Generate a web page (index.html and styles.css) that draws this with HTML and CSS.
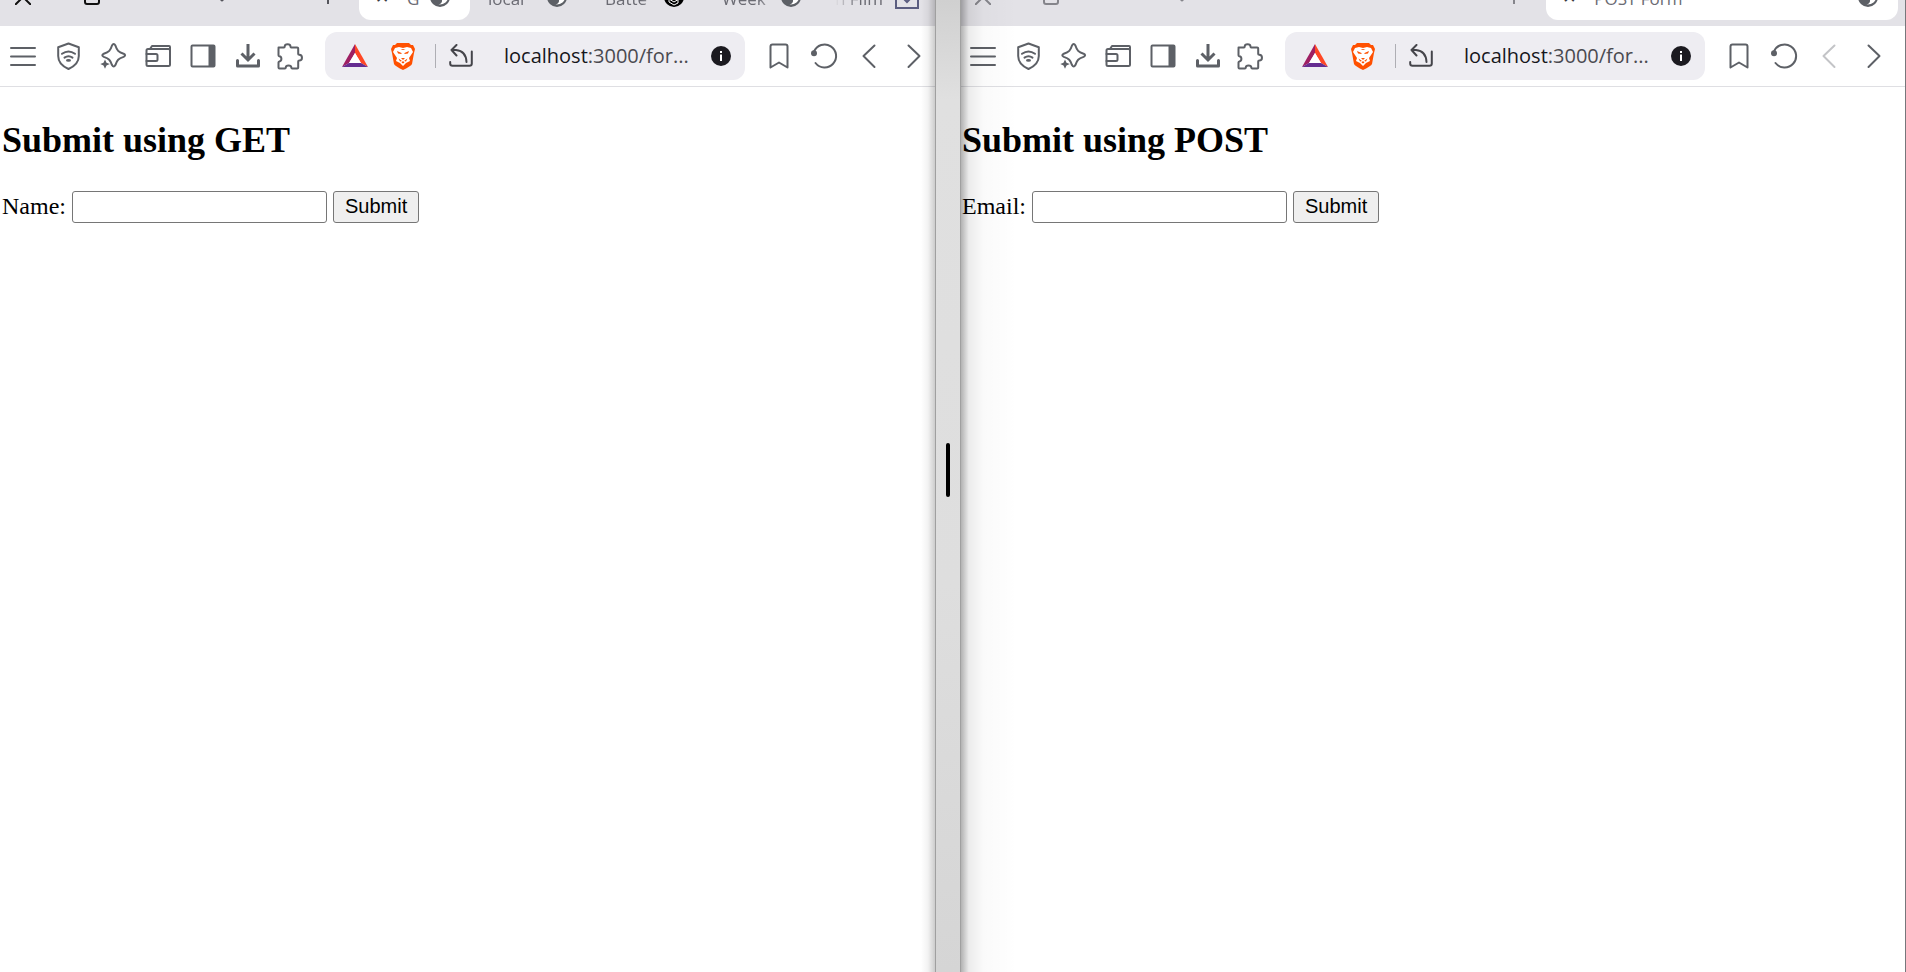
FILE: index.html
```html
<!DOCTYPE html>
<html lang="en">
<head>
<meta charset="utf-8">
<title>GET and POST forms</title>
<link rel="stylesheet" href="styles.css">
</head>
<body>
<svg class="defs" aria-hidden="true">
  <symbol id="menu" viewBox="0 0 40 48"><path d="M8 16h24M8 24.5h24M8 33h24"/></symbol>
  <symbol id="shield" viewBox="0 0 40 48"><path d="M20.5 11.5 30.8 15.2V24c0 6.200-4.200 10.300-10.300 13C14.400 34.300 10.200 30.200 10.200 24V15.200Z"/><path d="M14 21.800Q20.500 17 27 21.800M16.500 25.600Q20.500 22.700 24.500 25.600"/><ellipse class="solid" cx="20.500" cy="28.400" rx="2.500" ry="1.300"/></symbol>
  <symbol id="star" viewBox="0 0 40 48"><path d="M19 13.500q1.700-3 3.400 0c1.600 5 3 6.500 8.200 8.200q3 1.500 0 3.200c-5.200 1.700-6.600 3-8.200 8.200q-1.700 3-3.400 0c-1.600-5.200-3-6.500-8.200-8.200q-3-1.600 0-3.200c5.200-1.700 6.600-3.200 8.200-8.200Z"/><path class="solid" d="M12 27.500 13.500 30.700 16.800 32 13.500 33.400 12 36.700 10.500 33.400 7.300 32 10.500 30.700Z"/></symbol>
  <symbol id="wallet" viewBox="0 0 40 48"><rect x="8.500" y="17" width="23.500" height="17" rx="1.500"/><path d="M12 17 14 14H31q1 0 1 1v4M8.500 22H18q1.500 0 1.500 1.500v4Q19.500 29 18 29H8.500"/></symbol>
  <symbol id="panel" viewBox="0 0 40 48"><rect x="8.500" y="13.500" width="23" height="21" rx="1"/><path class="solid" d="M25.500 13.500h6v21h-6z"/></symbol>
  <symbol id="download" viewBox="0 0 40 48"><path class="heavy" d="M20 12v16M13.500 21.500 20 28l6.500-6.500"/><path class="tray" d="M9.500 28.500V34H30.500V28.500"/></symbol>
  <symbol id="puzzle" viewBox="0 0 40 48"><path d="M5.500 15.500h5.500c.5 0 .7-.4.700-1 .2-3 5.600-3 5.800 0 0 .6.200 1 .7 1h6q1 0 1 1v5.500c0 .6.500.8 1 .8 3.700.2 3.700 5.600 0 5.800-.6 0-1 .3-1 .9v6q0 1-1 1h-5c-.5 0-.8-.3-.8-.8-.2-3-5.500-3-5.700 0 0 .5-.3.800-.8.800h-5.400q-1 0-1-1v-5c0-.6.300-.9.800-1 2.800-.3 2.800-5 0-5.300-.5-.1-.8-.4-.8-1v-6.700q0-1 1-1Z"/></symbol>
  <symbol id="bookmark" viewBox="0 0 40 48"><path d="M13.500 12.500h13q2 0 2 2V35.500L20 30.500 11.500 35.500V14.500q0-2 2-2Z"/></symbol>
  <symbol id="reload" viewBox="0 0 40 48"><path d="M10 19.500A11.500 11.500 0 1 1 11.500 31"/><circle class="solid" cx="10" cy="21.300" r="3"/></symbol>
  <symbol id="back" viewBox="0 0 40 48"><path d="M25.500 13.500 14.500 24 25.500 35"/></symbol>
  <symbol id="forward" viewBox="0 0 40 48"><path d="M14.500 13.500 25.500 24 14.500 35"/></symbol>
  <symbol id="globe" viewBox="0 0 20 20"><circle class="solid" cx="10" cy="10" r="10"/><path d="M9 9h5q4-1 4-3 1.500 6-2.500 9.500-3 2.500-7 2 4-1 3.500-4.500H9Z" fill="#fff"/><path d="M2 9q4-3 6-1" class="land"/></symbol>
  <symbol id="bat" viewBox="0 0 28 26"><path d="M14 1 1 24l7-4 6-10Z" fill="#9e1f63"/><path d="M14 1 27 24l-7-4-6-10Z" fill="#ff4724"/><path d="M1 24h26l-7-4H8Z" fill="#662d91"/><path d="M14 10 8 20h12Z" fill="#fff"/></symbol>
  <symbol id="lion" viewBox="0 0 24 28"><path d="M6 1h12l2 2 2 0 2 4-1 4-2 11q-1 2-9 6-8-4-9-6L1 11 0 7l2-4h2Z" fill="#ff5000"/><path d="M4 6 8 5l4 1 4-1 4 1 2 4-4 6 1 3-4 2-3 3-3-3-4-2 1-3-4-6Z" fill="#fff"/><path d="M6 9l4.500 2v1L7 11.500ZM18 9l-4.500 2v1l3.500-.5ZM7.500 16.500l3.500 2.500-2 .5ZM16.500 16.500 13 19l2 .5ZM10 16h4l-2 2ZM9.500 7h5L12 8ZM12 19l1.500 1.500-1.500 1-1.500-1Z" fill="#ff5000"/></symbol>
  <symbol id="share" viewBox="0 0 24 24"><path d="M1.200 18v1.500q0 2.300 2.300 2.300h17q2.300 0 2.300-2.300V7.500M7.500 1 2.500 6l5 5.500M2.500 6H7q10 1 10.500 12"/></symbol>
  <symbol id="info" viewBox="0 0 20 20"><circle cx="10" cy="10" r="10" fill="#1b1a20"/><path d="M9 8.500h2V15H9zM9 5h2v2H9z" fill="#fff"/></symbol>
</svg>
<main class="desktop">
  <section class="window window-left" aria-label="GET form">
    <div class="strip">
      <button class="control" aria-label="Close"><svg class="glyph" viewBox="0 0 16 16"><path d="M0 0 16 16M16 0 0 16"/></svg></button>
      <button class="control wide" aria-label="Maximize"><svg class="glyph" viewBox="0 0 16 16"><rect x="1" y="1" width="14" height="14" rx="2"/></svg></button>
      <span class="control search"><svg class="glyph soft" viewBox="0 0 16 16"><path d="M4 8 8 11.500 12 8"/></svg></span>
      <button class="control new" aria-label="New tab"><svg class="glyph soft" viewBox="0 0 16 16"><path d="M8 0v15M1 7h14"/></svg></button>
      <div class="tabs">
        <div class="tab active"><span class="cross">✕</span><span class="name">G</span><svg class="favicon"><use href="#globe"/></svg></div>
        <div class="tab"><span class="name">local</span><svg class="favicon"><use href="#globe"/></svg></div>
        <div class="tab"><span class="name">Batte</span><svg class="favicon" viewBox="0 0 20 20"><circle cx="10" cy="10" r="10"/><path class="land thin" d="M6 5l8 5v6l-4 2-5-3V9l5-3 5 3M5 12l5 3 5-3"/></svg></div>
        <div class="tab"><span class="name">Week</span><svg class="favicon"><use href="#globe"/></svg></div>
        <div class="tab last"><span class="name lead">n Film</span><svg class="check" viewBox="0 0 24 24"><rect x="1" y="1" width="22" height="22"/><path d="M8 13 12 17 16 13"/></svg></div>
      </div>
    </div>
    <div class="toolbar">
      <button class="tool" aria-label="Menu"><svg><use href="#menu"/></svg></button>
      <button class="tool" aria-label="VPN"><svg><use href="#shield"/></svg></button>
      <button class="tool" aria-label="Assistant"><svg><use href="#star"/></svg></button>
      <button class="tool" aria-label="Wallet"><svg><use href="#wallet"/></svg></button>
      <button class="tool" aria-label="Sidebar"><svg><use href="#panel"/></svg></button>
      <button class="tool" aria-label="Downloads"><svg><use href="#download"/></svg></button>
      <button class="tool" aria-label="Extensions"><svg><use href="#puzzle"/></svg></button>
      <div class="address">
        <svg class="bat"><use href="#bat"/></svg>
        <svg class="lion"><use href="#lion"/></svg>
        <span class="rule"></span>
        <svg class="share"><use href="#share"/></svg>
        <span class="url"><b>localhost</b>:3000/for...</span>
        <svg class="info"><use href="#info"/></svg>
      </div>
      <button class="tool" aria-label="Bookmark"><svg><use href="#bookmark"/></svg></button>
      <button class="tool" aria-label="Reload"><svg><use href="#reload"/></svg></button>
      <button class="tool" aria-label="Back"><svg><use href="#back"/></svg></button>
      <button class="tool" aria-label="Forward"><svg><use href="#forward"/></svg></button>
    </div>
    <div class="page">
      <h2>Submit using GET</h2>
      <form method="get">
        <label for="name">Name:</label>
        <input id="name" name="name" type="text">
        <button class="submit" type="submit">Submit</button>
      </form>
    </div>
  </section>
  <div class="divider"><span class="handle"></span></div>
  <section class="window window-right" aria-label="POST form">
    <div class="strip">
      <button class="control" aria-label="Close"><svg class="glyph" viewBox="0 0 16 16"><path d="M0 0 16 16M16 0 0 16"/></svg></button>
      <button class="control wide" aria-label="Maximize"><svg class="glyph" viewBox="0 0 16 16"><rect x="1" y="1" width="14" height="14" rx="2"/></svg></button>
      <span class="control search"><svg class="glyph soft" viewBox="0 0 16 16"><path d="M4 8 8 11.500 12 8"/></svg></span>
      <button class="control new" aria-label="New tab"><svg class="glyph soft" viewBox="0 0 16 16"><path d="M8 0v15"/></svg></button>
      <div class="tabs">
        <div class="tab active"><span class="cross">✕</span><span class="name">POST Form</span><svg class="favicon"><use href="#globe"/></svg></div>
      </div>
    </div>
    <div class="toolbar">
      <button class="tool" aria-label="Menu"><svg><use href="#menu"/></svg></button>
      <button class="tool" aria-label="VPN"><svg><use href="#shield"/></svg></button>
      <button class="tool" aria-label="Assistant"><svg><use href="#star"/></svg></button>
      <button class="tool" aria-label="Wallet"><svg><use href="#wallet"/></svg></button>
      <button class="tool" aria-label="Sidebar"><svg><use href="#panel"/></svg></button>
      <button class="tool" aria-label="Downloads"><svg><use href="#download"/></svg></button>
      <button class="tool" aria-label="Extensions"><svg><use href="#puzzle"/></svg></button>
      <div class="address">
        <svg class="bat"><use href="#bat"/></svg>
        <svg class="lion"><use href="#lion"/></svg>
        <span class="rule"></span>
        <svg class="share"><use href="#share"/></svg>
        <span class="url"><b>localhost</b>:3000/for...</span>
        <svg class="info"><use href="#info"/></svg>
      </div>
      <button class="tool" aria-label="Bookmark"><svg><use href="#bookmark"/></svg></button>
      <button class="tool" aria-label="Reload"><svg><use href="#reload"/></svg></button>
      <button class="tool" aria-label="Back" disabled><svg><use href="#back"/></svg></button>
      <button class="tool" aria-label="Forward"><svg><use href="#forward"/></svg></button>
    </div>
    <div class="page">
      <h2>Submit using POST</h2>
      <form method="post">
        <label for="email">Email:</label>
        <input id="email" name="email" type="text">
        <button class="submit" type="submit">Submit</button>
      </form>
    </div>
  </section>
</main>
</body>
</html>
```
FILE: styles.css
```css
* { box-sizing: border-box; }
body { margin: 0; background: #fff; color: #000; }
.defs { position: absolute; width: 0; height: 0; }

.desktop {
  display: grid;
  grid-template-columns: minmax(0, 935fr) 26px minmax(0, 945fr);
  min-height: 100vh;
}
.window { position: relative; min-width: 0; }
.window-right { border-right: 1px solid #77777b; }
.window::after {
  content: "";
  position: absolute;
  top: 0;
  bottom: 0;
  pointer-events: none;
}
.window-left::after {
  right: 0;
  width: 14px;
  background: linear-gradient(to left, rgba(0, 0, 0, .2), rgba(0, 0, 0, .05) 50%, transparent);
}
.window-right::after {
  left: 0;
  width: 56px;
  background: linear-gradient(to right, rgba(0, 0, 0, .3), rgba(0, 0, 0, .08) 14%, rgba(0, 0, 0, .02) 40%, transparent);
}

.divider {
  display: flex;
  align-items: center;
  justify-content: center;
  border: solid #a0a0a0;
  border-width: 0 1px;
  background: linear-gradient(#d0d0d0, #e0e0e0 100px, #dedede 60%, #d5d5d5);
}
.handle { width: 4px; height: 54px; margin-bottom: 32px; border-radius: 2px; background: #000; }

/* Tab strip: the upper half of the controls is cut off by the window edge */
.strip {
  display: flex;
  align-items: flex-end;
  height: 26px;
  padding-bottom: 6px;
  overflow: hidden;
  background: #e3e2e7;
  font-family: "Open Sans", "Noto Sans", sans-serif;
  font-size: 17px;
  color: #6b6b73;
}
.control {
  display: flex;
  flex: none;
  align-items: center;
  justify-content: center;
  width: 46px;
  height: 46px;
  padding: 0;
  border: 0;
  background: none;
}
.wide { width: 92px; }
.search { width: 168px; }
.new { width: 44px; }
.glyph { width: 16px; height: 16px; fill: none; stroke: #111; stroke-width: 2; }
.soft { stroke: #55555c; }
.tabs { display: flex; flex: 1; gap: 6px; min-width: 0; padding-left: 9px; }
.tab {
  display: flex;
  flex: none;
  align-items: center;
  width: 111px;
  height: 46px;
  padding: 0 20px 0 12px;
  border-radius: 12px;
}
.active { padding-left: 16px; background: #fff; }
.cross { flex: none; width: 32px; font-family: "DejaVu Sans", sans-serif; color: #3a3a40; }
.name {
  flex: 1;
  min-width: 0;
  padding-top: 2px;
  overflow: hidden;
  white-space: nowrap;
  -webkit-mask-image: linear-gradient(to right, #000 60%, transparent);
  mask-image: linear-gradient(to right, #000 60%, transparent);
}
.active .name { -webkit-mask-image: none; mask-image: none; }
.favicon { flex: none; width: 20px; height: 20px; color: #5d5f66; }
.last { width: 106px; padding: 0 14px 0 8px; }
.name.lead {
  -webkit-mask-image: linear-gradient(to right, transparent, #000 40%);
  mask-image: linear-gradient(to right, transparent, #000 40%);
}
.check { flex: none; width: 24px; height: 24px; fill: none; stroke: #5b5d80; stroke-width: 2; }
.window-right .control:first-child { width: 44px; }
.window-right .glyph { stroke: #85858b; }
.window-right .search { width: 170px; }
.window-right .new { flex: 1; justify-content: flex-end; padding-right: 24px; }
.window-right .tabs { flex: none; width: 38%; min-width: 200px; padding: 0 7px 0 0; }
.window-right .tab { flex: 1; }

.toolbar {
  display: flex;
  gap: 5px;
  height: 61px;
  padding: 6px 1px 6px 3px;
  border-bottom: 1px solid #dfdfe3;
}
.window-right .toolbar { padding: 6px 11px 6px 2px; }
.tool { flex: none; width: 40px; height: 48px; padding: 0; border: 0; background: none; color: #5d6066; }
.tool svg { display: block; width: 40px; height: 48px; fill: none; stroke: currentColor; stroke-width: 2; stroke-linecap: round; stroke-linejoin: round; }
.tool:disabled { color: #c3c4c7; }
.solid { fill: #5d6066; stroke: none; }
.heavy { stroke-width: 3; stroke-linecap: butt; stroke-linejoin: miter; }
.tray { stroke-width: 3; }
.land { fill: none; stroke: #fff; stroke-width: 2; }
.thin { stroke-width: 1; }

.address {
  display: flex;
  flex: 1;
  align-items: center;
  min-width: 0;
  height: 48px;
  margin: 0 9px 0 7px;
  padding: 0 14px 0 16px;
  border-radius: 12px;
  background: #eeedf2;
}
.address svg { flex: none; }
.bat { width: 28px; height: 26px; margin-right: 22px; }
.lion { width: 24px; height: 28px; margin-right: 20px; }
.rule { flex: none; width: 1px; height: 24px; background: #aeaeb4; }
.share { width: 24px; height: 24px; margin: 0 31px 0 13px; fill: none; stroke: #45454b; stroke-width: 2; stroke-linecap: round; stroke-linejoin: round; }
.url {
  flex: 1;
  min-width: 0;
  overflow: hidden;
  font: 20px/28px "Open Sans", "Noto Sans", sans-serif;
  white-space: nowrap;
  color: #4a4a50;
}
.url b { font-weight: 400; color: #17171b; }
.info { width: 20px; height: 20px; }

.page { padding: 32px 2px; font: 24px/28px "Liberation Serif", "Times New Roman", serif; }
.window-right .page { padding-left: 1px; }
.page h2 { margin: 0 0 30px; font-size: 36px; line-height: 42px; }
.page form { display: flex; align-items: center; gap: 6px; }
.page label { line-height: 26px; padding-bottom: 2px; }
.page input, .submit { height: 32px; border: 1px solid #767676; border-radius: 3px; font: 20px/24px "Liberation Sans", Arial, sans-serif; color: #000; }
.page input { width: 255px; padding: 1px 4px; background: #fff; }
.submit { padding: 0 11px 2px; background: #efefef; }
```
